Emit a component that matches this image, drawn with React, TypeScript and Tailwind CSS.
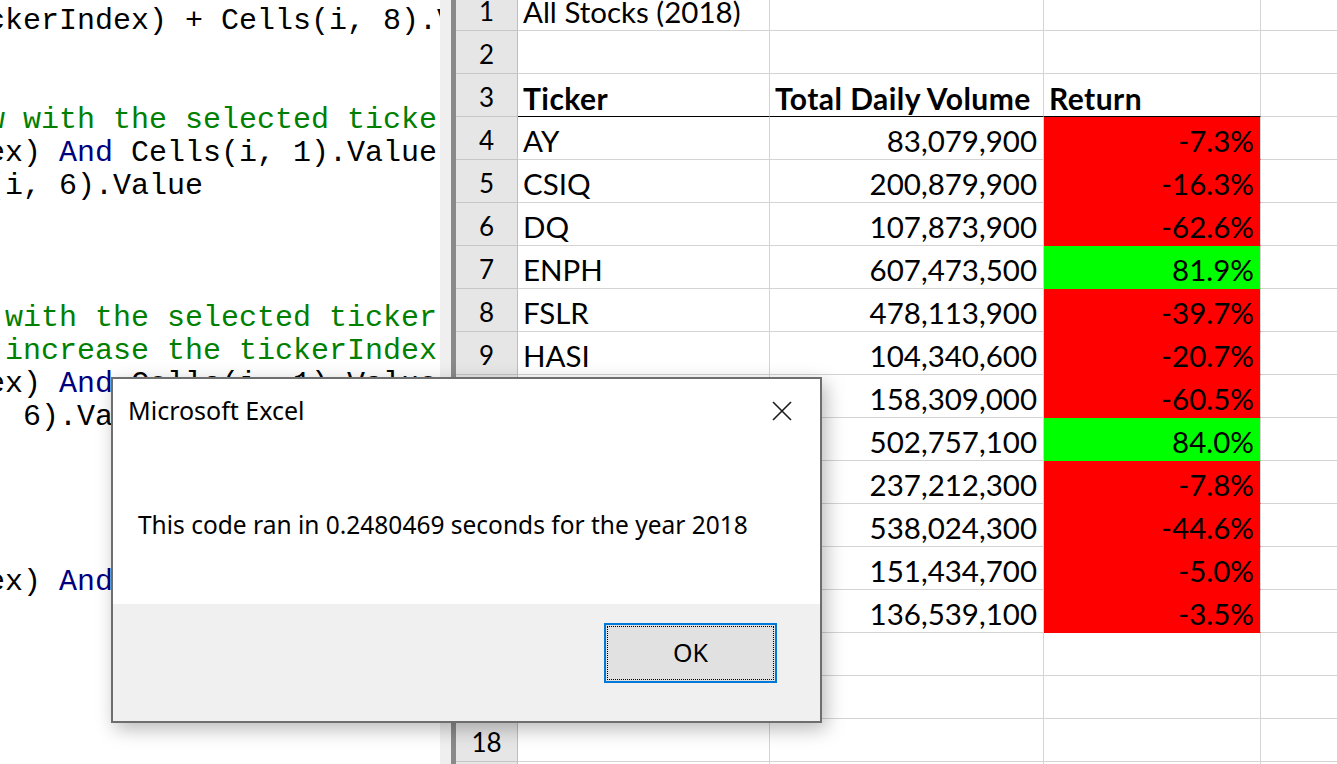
import React from "react";

type Seg = { t: string; c?: "k" | "g" };
const codeLines: Seg[][] = [
  [{ t: "ckerIndex) + Cells(i, 8).Value" }],
  [],
  [],
  [{ t: "w with the selected ticker", c: "g" }],
  [{ t: "ex) " }, { t: "And", c: "k" }, { t: " Cells(i, 1).Value" }],
  [{ t: "(i, 6).Value" }],
  [],
  [],
  [],
  [{ t: " with the selected ticker", c: "g" }],
  [{ t: " increase the tickerIndex", c: "g" }],
  [{ t: "ex) " }, { t: "And", c: "k" }, { t: " Cells(i, 1).Value" }],
  [{ t: ", 6).Value" }],
  [],
  [],
  [],
  [],
  [{ t: "ex) " }, { t: "And", c: "k" }, { t: " Cells(i, 1).Value" }],
  [],
  [],
  [],
  [],
  [],
  [],
];

type Row = {
  n: number;
  a?: string;
  b?: string;
  c?: string;
  h?: boolean;
  f?: "r" | "g";
};

const rows: Row[] = [
  { n: 1, a: "All Stocks (2018)" },
  { n: 2 },
  { n: 3, a: "Ticker", b: "Total Daily Volume", c: "Return", h: true },
  { n: 4, a: "AY", b: "83,079,900", c: "-7.3%", f: "r" },
  { n: 5, a: "CSIQ", b: "200,879,900", c: "-16.3%", f: "r" },
  { n: 6, a: "DQ", b: "107,873,900", c: "-62.6%", f: "r" },
  { n: 7, a: "ENPH", b: "607,473,500", c: "81.9%", f: "g" },
  { n: 8, a: "FSLR", b: "478,113,900", c: "-39.7%", f: "r" },
  { n: 9, a: "HASI", b: "104,340,600", c: "-20.7%", f: "r" },
  { n: 10, a: "JKS", b: "158,309,000", c: "-60.5%", f: "r" },
  { n: 11, a: "RUN", b: "502,757,100", c: "84.0%", f: "g" },
  { n: 12, a: "SEDG", b: "237,212,300", c: "-7.8%", f: "r" },
  { n: 13, a: "SPWR", b: "538,024,300", c: "-44.6%", f: "r" },
  { n: 14, a: "TERP", b: "151,434,700", c: "-5.0%", f: "r" },
  { n: 15, a: "VSLR", b: "136,539,100", c: "-3.5%", f: "r" },
  { n: 16 },
  { n: 17 },
  { n: 18 },
  { n: 19 },
];

function SheetRow({ r }: { r: Row }) {
  const hb = r.h ? "border-b-black" : "border-b-[#d4d4d4]";
  const fillCls =
    r.f === "r"
      ? "bg-[#ff0000] border-b-[#ff0000]"
      : r.f === "g"
      ? "bg-[#00ff00] border-b-[#00ff00]"
      : hb;
  const txt = r.h
    ? "text-[30px] font-bold tracking-[0.45px]"
    : "text-[29.5px]";
  return (
    <div className="flex h-[43px] shrink-0 leading-[34px]">
      <div className="w-[62px] shrink-0 bg-[#e6e6e6] border-r border-r-[#bdbdbd] border-b border-b-[#c6c6c6] flex items-center justify-center pt-[3px] text-[26px] text-black">
        {r.n}
      </div>
      <div
        className={`w-[252px] shrink-0 border-r border-r-[#d4d4d4] border-b ${hb} flex items-end pl-[5px] pb-[1px] ${txt}`}
      >
        {r.a}
      </div>
      <div
        className={`w-[274px] shrink-0 border-r border-r-[#d4d4d4] border-b ${hb} flex items-end ${
          r.h ? "justify-start pl-[5px]" : "justify-end pr-[6px]"
        } pb-[1px] ${txt}`}
      >
        {r.b}
      </div>
      <div
        className={`w-[217px] shrink-0 border-r border-r-[#d4d4d4] border-b ${fillCls} flex items-end ${
          r.h ? "justify-start pl-[5px]" : "justify-end pr-[6px]"
        } pb-[1px] ${txt}`}
      >
        {r.c}
      </div>
      <div className="flex-1 border-r border-r-[#d4d4d4] border-b border-b-[#d4d4d4]" />
    </div>
  );
}

export default function App() {
  return (
    <div className="relative w-[1338px] h-[764px] overflow-hidden bg-white flex">
      {/* code panel */}
      <div
        className="w-[440px] shrink-0 overflow-hidden bg-white pt-[5px] text-[30px] leading-[33px] text-black"
        style={{ fontFamily: '"Liberation Mono", "Courier New", monospace' }}
      >
        {codeLines.map((segs, i) => (
          <div key={i} className="h-[33px] whitespace-pre -ml-[13px]">
            {segs.map((s, j) => (
              <span
                key={j}
                className={
                  s.c === "k"
                    ? "text-[#00007f]"
                    : s.c === "g"
                    ? "text-[#008000]"
                    : "text-black"
                }
              >
                {s.t}
              </span>
            ))}
          </div>
        ))}
      </div>
      <div className="w-[11px] shrink-0 bg-[#efefef]" />
      <div className="w-[5px] shrink-0 bg-[#8a8a8a]" />
      {/* sheet */}
      <div
        className="flex-1 overflow-hidden text-black"
        style={{ fontFamily: 'Lato, "Open Sans", sans-serif' }}
      >
        <div className="-mt-[12px] flex flex-col">
          {rows.map((r) => (
            <SheetRow key={r.n} r={r} />
          ))}
        </div>
      </div>

      {/* message box */}
      <div
        className="absolute left-[111px] top-[377px] w-[711px] h-[346px] border-2 border-[#6e6e6e] bg-[#f0f0f0] flex flex-col shadow-[4px_6px_18px_rgba(0,0,0,0.28)]"
        style={{ fontFamily: '"Noto Sans", "Open Sans", sans-serif' }}
      >
        <div className="h-[225px] bg-white flex flex-col">
          <div className="flex items-center justify-between h-[64px] pl-[15px] pr-[28px]">
            <span className="text-[25px] text-black">Microsoft Excel</span>
            <svg width="20" height="20" viewBox="0 0 20 20">
              <path d="M1 1 L19 19 M19 1 L1 19" stroke="#1a1a1a" strokeWidth="1.6" fill="none" />
            </svg>
          </div>
          <div className="pl-[25px] pt-[64px] text-[24.5px] text-black">
            This code ran in 0.2480469 seconds for the year 2018
          </div>
        </div>
        <div className="flex-1 flex justify-end items-start pt-[19px] pr-[43px]">
          <div className="w-[173px] h-[60px] border-2 border-[#0078d7] bg-[#e1e1e1] p-[1px]">
            <div className="w-full h-full border border-dotted border-black flex items-center justify-center text-[25px] text-black">
              OK
            </div>
          </div>
        </div>
      </div>
    </div>
  );
}
